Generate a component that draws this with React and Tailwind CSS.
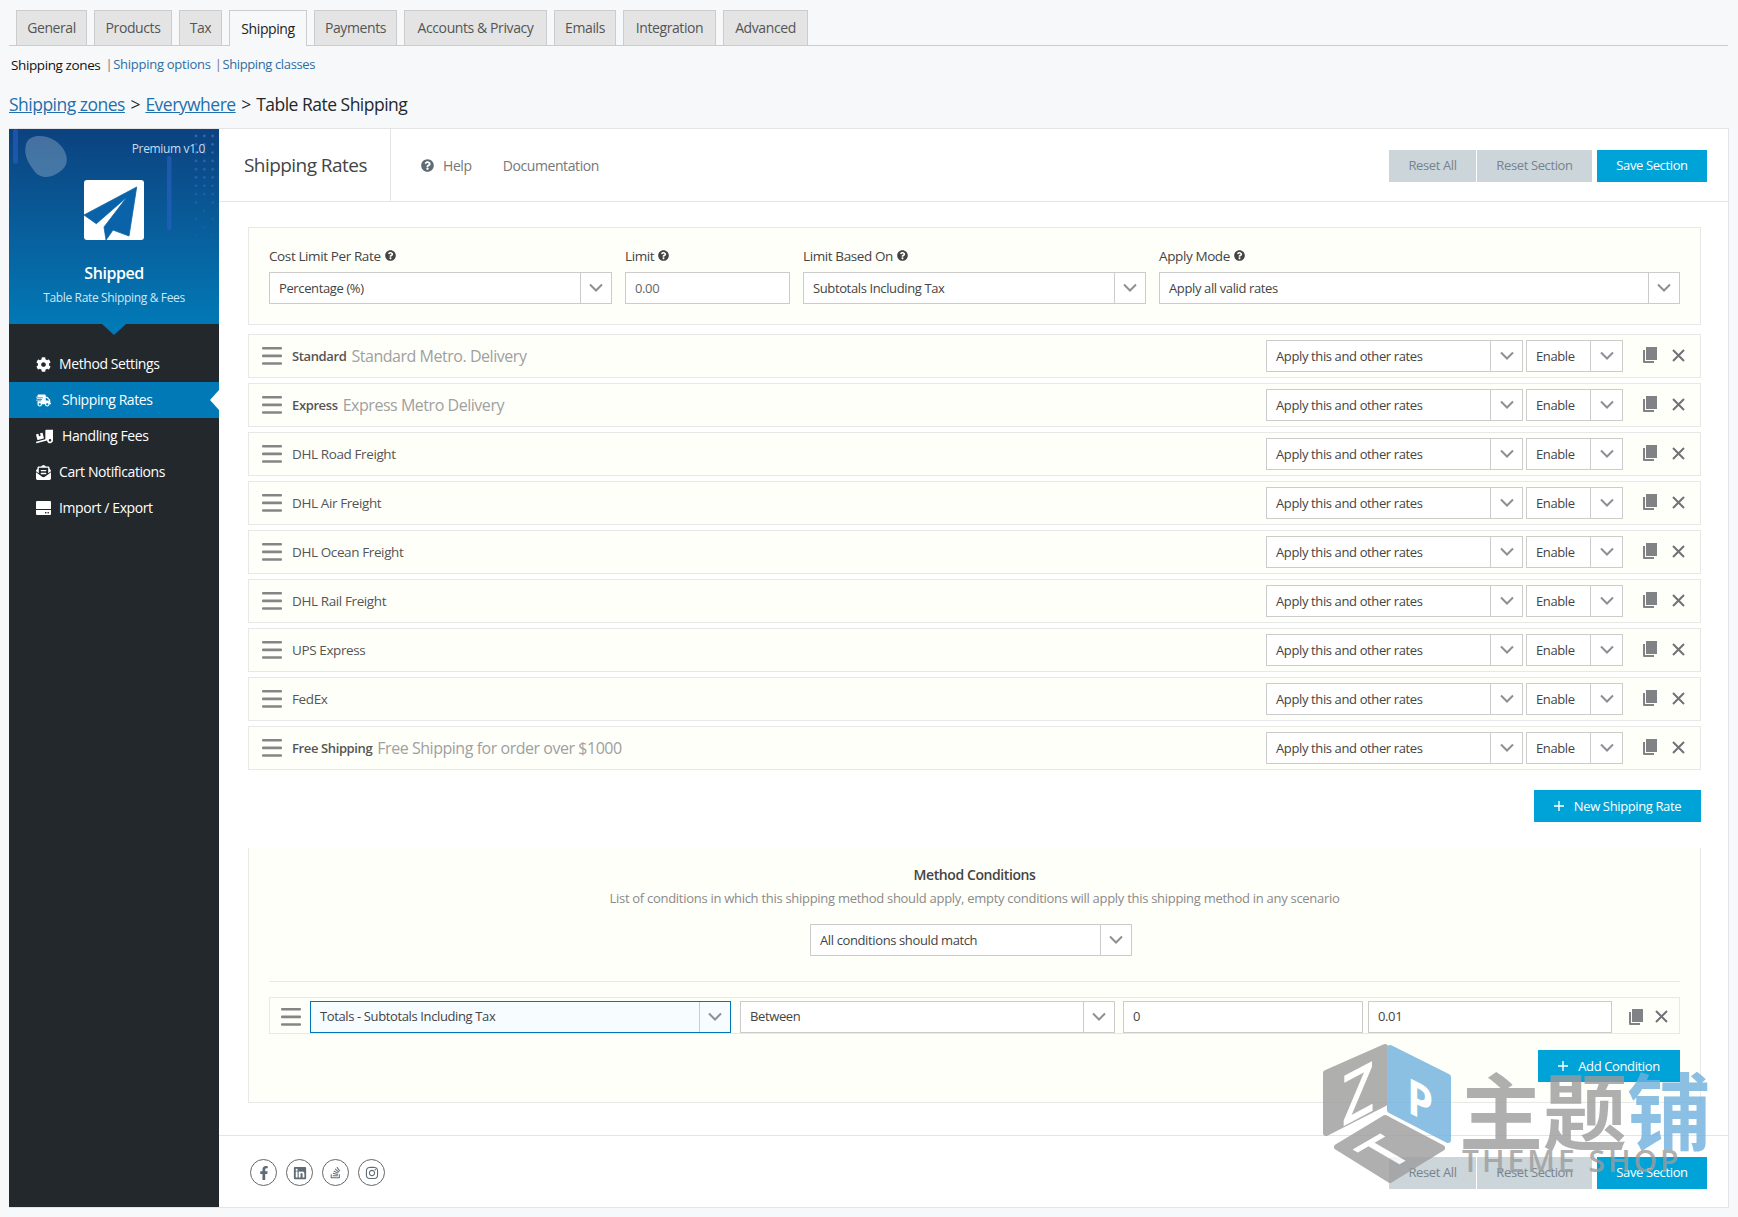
import {
  FaCog,
  FaShippingFast,
  FaTruckLoading,
  FaEnvelopeOpenText,
  FaQuestionCircle,
  FaFacebookF,
  FaLinkedin,
  FaStackOverflow,
  FaInstagram,
} from "react-icons/fa";

const tabs = [
  { label: "General", w: "w-[71px]" },
  { label: "Products", w: "w-[78px]" },
  { label: "Tax", w: "w-[43px]" },
  { label: "Shipping", w: "w-[78px]", active: true },
  { label: "Payments", w: "w-[83px]" },
  { label: "Accounts & Privacy", w: "w-[143px]" },
  { label: "Emails", w: "w-[62px]" },
  { label: "Integration", w: "w-[93px]" },
  { label: "Advanced", w: "w-[85px]" },
];

function DriveIcon({ className }) {
  return (
    <svg width="15" height="14" viewBox="0 0 15 14" className={className}>
      <path d="M1 0h13a1 1 0 0 1 1 1v7H0V1a1 1 0 0 1 1-1z" fill="#fff" />
      <path d="M0 9h15v4a1 1 0 0 1-1 1H1a1 1 0 0 1-1-1z" fill="#fff" />
      <rect x="9" y="11" width="1.4" height="1.4" fill="#23282d" />
      <rect x="11.5" y="11" width="1.4" height="1.4" fill="#23282d" />
    </svg>
  );
}

const menu = [
  { label: "Method Settings", icon: FaCog, slot: "w-[23px]", size: "text-[15px]" },
  { label: "Shipping Rates", icon: FaShippingFast, active: true, slot: "w-[26px]", size: "text-[15px]" },
  { label: "Handling Fees", icon: FaTruckLoading, slot: "w-[26px]", size: "text-[17px]" },
  { label: "Cart Notifications", icon: FaEnvelopeOpenText, slot: "w-[23px]", size: "text-[15px]" },
  { label: "Import / Export", icon: DriveIcon, slot: "w-[23px]", size: "text-[14px]" },
];

const rates = [
  { name: "Standard", note: "Standard Metro. Delivery", strong: true },
  { name: "Express", note: "Express Metro Delivery", strong: true },
  { name: "DHL Road Freight" },
  { name: "DHL Air Freight" },
  { name: "DHL Ocean Freight" },
  { name: "DHL Rail Freight" },
  { name: "UPS Express" },
  { name: "FedEx" },
  { name: "Free Shipping", note: "Free Shipping for order over $1000", strong: true },
];

function Chevron() {
  return (
    <svg width="16" height="10" viewBox="0 0 16 10" fill="none">
      <path d="M2 1.5 8 7.5 14 1.5" stroke="#8c8f94" strokeWidth="2" />
    </svg>
  );
}

function Bars() {
  return (
    <svg width="20" height="18" viewBox="0 0 20 18" className="shrink-0">
      <rect y="0" width="20" height="2.6" rx="1" fill="#858585" />
      <rect y="7.6" width="20" height="2.6" rx="1" fill="#858585" />
      <rect y="15.2" width="20" height="2.6" rx="1" fill="#858585" />
    </svg>
  );
}

function CopyIcon() {
  return (
    <svg width="14" height="16" viewBox="0 0 14 16" className="block shrink-0">
      <path d="M0 3h2v11h9v2H1a1 1 0 0 1-1-1z" fill="#808285" />
      <rect x="3" y="0" width="11" height="13" fill="#808285" />
    </svg>
  );
}

function CloseIcon() {
  return (
    <svg width="13" height="13" viewBox="0 0 13 13" className="block shrink-0">
      <path d="M1 1 12 12M12 1 1 12" stroke="#6f7276" strokeWidth="2" />
    </svg>
  );
}

function Select({ value, className, arrow = "w-[31px]", focused }) {
  return (
    <div
      className={`flex h-8 shrink-0 items-center border text-[13px] text-[#444] ${
        focused ? "border-[#0277b5] bg-[#f6fcff]" : "border-[#ccc] bg-white"
      } ${className}`}
    >
      <span className="flex-1 truncate pt-px pl-[9px]">{value}</span>
      <span className={`flex h-full items-center justify-center border-l border-[#ccc] ${arrow}`}>
        <Chevron />
      </span>
    </div>
  );
}

function Field({ label, children, className }) {
  return (
    <div className={className}>
      <div className="mb-[7px] flex h-[18px] items-center gap-[4px] text-[13.5px] text-[#444]">
        <span>{label}</span>
        <FaQuestionCircle className="mb-[2px] text-[11px] text-[#444]" />
      </div>
      {children}
    </div>
  );
}

function ActionButtons() {
  return (
    <div className="flex items-center text-[13px]">
      <span className="flex h-8 w-[87px] items-center justify-center bg-[#ccd5da] text-[#76838c]">Reset All</span>
      <span className="ml-px flex h-8 w-[115px] items-center justify-center bg-[#ccd5da] text-[#76838c]">
        Reset Section
      </span>
      <span className="ml-[5px] flex h-8 w-[110px] items-center justify-center bg-[#00a3d8] text-white">
        Save Section
      </span>
    </div>
  );
}

function RateRow({ rate }) {
  return (
    <div className="flex h-[44px] items-center border border-[#e8e8e8] bg-[#fffffa] pl-[13px] text-[#555]">
      <Bars />
      <span className={`ml-[10px] pt-px ${rate.strong ? "text-[13px] font-semibold" : "text-[13.5px] font-medium"}`}>
        {rate.name}
      </span>
      {rate.note && <span className="ml-[5px] text-[16px] text-[#a0a0a0]">{rate.note}</span>}
      <div className="ml-auto flex items-center">
        <Select value="Apply this and other rates" className="w-[257px]" arrow="w-[32px]" />
        <Select value="Enable" className="ml-[3px] w-[97px]" arrow="w-[32px]" />
        <span className="mr-[15px] mb-[2px] ml-[20px]">
          <CopyIcon />
        </span>
        <span className="mr-[15px] mb-[2px]">
          <CloseIcon />
        </span>
      </div>
    </div>
  );
}

function BlueButton({ label, className }) {
  return (
    <span className={`flex h-8 items-center justify-center gap-[10px] bg-[#00a3d8] text-[13px] text-white ${className}`}>
      <svg width="10" height="10" viewBox="0 0 10 10">
        <path d="M5 0v10M0 5h10" stroke="#fff" strokeWidth="1.4" />
      </svg>
      <span className="pt-px">{label}</span>
    </span>
  );
}

function HeaderArt() {
  const dots = [];
  for (let col = 0; col < 3; col++) {
    for (let row = 0; row < 13; row++) {
      if ((row + col) % 2 === 1 && row > 7) continue;
      dots.push(
        <circle key={`${col}-${row}`} cx={187 + col * 8.3} cy={7 + row * 8.3} r="1.4" fill="#3f6fd0" opacity={0.75 - row * 0.05} />,
      );
    }
  }
  return (
    <svg width="210" height="195" viewBox="0 0 210 195" className="absolute inset-0">
      <rect x="4" y="0" width="5" height="35" rx="2.5" fill="#2a5fc4" opacity="0.6" />
      <path d="M17 15C20 5 35 5 45 11C58 19 62 34 53 41C43 50 32 50 26 43C21 36 14 28 17 15Z" fill="#fff" opacity="0.24" />
      <rect x="158" y="27" width="4.5" height="74" rx="2" fill="#2a5fc4" opacity="0.65" />
      {dots}
    </svg>
  );
}

function SidebarHeader() {
  return (
    <div className="relative h-[195px] bg-gradient-to-b from-[#0b427f] to-[#0179b6]">
      <HeaderArt />
      <div className="relative flex flex-col items-center text-white">
        <div className="mt-[11px] mb-[22px] w-full pr-[14px] text-right text-[12px] leading-[18px] text-[#c8dcf0]">
          Premium v1.0
        </div>
        <div className="h-[60px] w-[60px] rounded-[3px] bg-white">
          <svg width="60" height="60" viewBox="0 0 60 60">
            <path
              d="M52.7 7 0 35l12.3 8.7L43 17 20 47l2 13 7-10 16 6z"
              fill="#0a63a8"
              stroke="#0a63a8"
              strokeWidth="0.8"
              strokeLinejoin="round"
            />
          </svg>
        </div>
        <div className="mt-[21px] text-[16px] leading-[24px] font-semibold">Shipped</div>
        <div className="mt-[4px] text-[12px] leading-[18px] text-[#cfe6f5]">Table Rate Shipping &amp; Fees</div>
      </div>
      <span className="absolute top-full left-1/2 -ml-[12px] h-0 w-0 border-x-[12px] border-t-[11px] border-x-transparent border-t-[#0179b6]" />
    </div>
  );
}

function Sidebar() {
  return (
    <aside className="w-[210px] shrink-0 bg-[#23282d]">
      <SidebarHeader />
      <ul className="mt-[22px]">
        {menu.map((item) => (
          <li
            key={item.label}
            className={`relative flex h-9 items-center pl-[27px] text-[14px] text-white ${item.active ? "bg-[#0179b6]" : ""}`}
          >
            <span className={`shrink-0 ${item.slot}`}>
              <item.icon className={item.size} />
            </span>
            <span className="pb-px">{item.label}</span>
            {item.active && (
              <span className="absolute top-1/2 right-0 -mt-[10px] h-0 w-0 border-y-[10px] border-r-[9px] border-y-transparent border-r-white" />
            )}
          </li>
        ))}
      </ul>
    </aside>
  );
}

function Social({ icon: Icon, size }) {
  return (
    <span className="flex h-[27px] w-[27px] items-center justify-center rounded-full border border-[#666] text-[#5f6b75]">
      <Icon className={size} />
    </span>
  );
}

function Watermark() {
  return (
    <div className="pointer-events-none absolute top-[1040px] left-[1320px] opacity-80">
      <svg width="135" height="145" viewBox="0 0 135 145" className="absolute top-0 left-0">
        <path d="M65 7 6 33v60l59-30z" fill="#9c9c9c" stroke="#9c9c9c" strokeWidth="6" strokeLinejoin="round" />
        <path d="M70 8l58 29v63L70 70z" fill="#6fb1de" stroke="#6fb1de" strokeWidth="6" strokeLinejoin="round" />
        <path d="M65 78l57 30-52 32-53-33z" fill="#9c9c9c" stroke="#9c9c9c" strokeWidth="6" strokeLinejoin="round" />
        <text transform="translate(22 87) skewY(-28) scale(.8 1)" fontSize="70" fontWeight="600" fill="#fff" fontFamily="Open Sans">
          Z
        </text>
        <text transform="translate(87 72) skewY(26) scale(.85 1)" fontSize="49" fontWeight="700" fill="#fff" fontFamily="Open Sans">
          P
        </text>
        <text transform="matrix(1.03 -0.6 1.01 0.59 68 131)" fontSize="50" fontWeight="600" fill="#fff" fontFamily="Open Sans">
          T
        </text>
      </svg>
      <div className="absolute top-[15px] left-[139px] flex text-[84px] leading-[106px] font-bold whitespace-nowrap text-[#9c9c9c] [font-family:'Noto_Sans_CJK_SC',sans-serif]">
        <span className="tracking-normal!">主题</span>
        <span className="tracking-normal! text-[#6fb1de]">铺</span>
      </div>
      <div className="absolute top-[99px] left-[142px] text-[30px] leading-[44px] font-semibold tracking-[3px]! whitespace-nowrap text-[#9c9c9c]">
        THEME SHOP
      </div>
    </div>
  );
}

export default function App() {
  return (
    <div className="relative h-[1217px] w-[1738px] overflow-hidden bg-[#f7f8fa] pt-[10px] text-[#444] [font-family:'Open_Sans',sans-serif] [&_*]:tracking-[-0.029em]">
      <div className="mr-[10px] ml-[9px] flex h-[36px] gap-[7px] border-b border-[#ccc] pl-[7px]">
        {tabs.map((tab) => (
          <span
            key={tab.label}
            className={`flex items-center justify-center border border-b-0 border-[#ccc] pb-px text-[14px] ${tab.w} ${
              tab.active ? "-mb-px bg-[#f7f8fa] font-medium text-[#222]" : "bg-[#e4e4e4] text-[#555]"
            }`}
          >
            {tab.label}
          </span>
        ))}
      </div>

      <div className="mt-[9px] ml-[11px] flex h-[20px] items-center text-[13px] text-[#2e6da4]">
        <span className="text-[13.5px] font-medium text-[#111]">Shipping zones</span>
        <span className="ml-[5px] text-[#777]">|</span>
        <span className="ml-px tracking-[-0.02em]!">Shipping options</span>
        <span className="ml-[4px] text-[#777]">|</span>
        <span className="ml-px">Shipping classes</span>
      </div>

      <div className="mt-[16px] ml-[9px] flex h-[26px] items-center gap-[5.5px] text-[17.5px] text-[#23282d]">
        <a className="text-[#1f70ad] underline">Shipping zones</a>
        <span>&gt;</span>
        <a className="text-[#1f70ad] underline">Everywhere</a>
        <span>&gt;</span>
        <span>Table Rate Shipping</span>
      </div>

      <div className="mt-[11px] ml-[9px] flex h-[1080px] w-[1720px] border border-l-0 border-[#e2e4e7] bg-white">
        <Sidebar />
        <main className="flex min-w-0 flex-1 flex-col">
          <header className="flex h-[73px] shrink-0 items-center border-b border-[#e5e5e5] pr-[21px]">
            <div className="flex h-full w-[172px] items-center border-r border-[#e5e5e5] pl-[25px] text-[19px] font-medium text-[#444]">
              Shipping Rates
            </div>
            <FaQuestionCircle className="ml-[30px] text-[13px] text-[#5f6b75]" />
            <span className="ml-[9px] text-[14px] text-[#777]">Help</span>
            <span className="ml-[31px] text-[14px] text-[#777]">Documentation</span>
            <div className="mt-[2px] ml-auto">
              <ActionButtons />
            </div>
          </header>

          <div className="flex-1 pt-[25px] pr-[27px] pl-[29px]">
            <section className="flex h-[98px] border border-[#e8e8e8] bg-[#fffffa] pt-[19px] pl-[20px]">
              <Field label="Cost Limit Per Rate" className="w-[343px]">
                <Select value="Percentage (%)" className="w-full" />
              </Field>
              <Field label="Limit" className="ml-[13px] w-[165px]">
                <div className="flex h-8 items-center border border-[#ccc] bg-white pt-px pl-[9px] text-[13px] text-[#666]">0.00</div>
              </Field>
              <Field label="Limit Based On" className="ml-[13px] w-[343px]">
                <Select value="Subtotals Including Tax" className="w-full" />
              </Field>
              <Field label="Apply Mode" className="ml-[13px] w-[521px]">
                <Select value="Apply all valid rates" className="w-full" />
              </Field>
            </section>

            <div className="mt-[9px] flex flex-col gap-[5px]">
              {rates.map((rate) => (
                <RateRow key={rate.name} rate={rate} />
              ))}
            </div>

            <div className="mt-[20px] flex justify-end">
              <BlueButton label="New Shipping Rate" className="w-[167px]" />
            </div>

            <section className="mt-[26px] h-[255px] border border-t-0 border-[#e8e8e8] bg-[#fffffa] px-[20px] pt-[17px]">
              <div className="text-center text-[14px] leading-[20px] font-semibold text-[#444]">Method Conditions</div>
              <div className="mt-[3px] text-center text-[13px] leading-[20px] tracking-[-0.022em]! text-[#8a8a8a]">
                List of conditions in which this shipping method should apply, empty conditions will apply this shipping
                method in any scenario
              </div>
              <div className="mt-[16px] flex justify-center">
                <Select value="All conditions should match" className="mr-[7px] w-[322px]" />
              </div>
              <div className="mt-[25px] border-t border-[#e8e8e8]" />
              <div className="mt-[15px] flex h-[37px] items-center border border-[#e8e8e8] pt-[2px] pl-[11px]">
                <Bars />
                <Select value="Totals - Subtotals Including Tax" className="ml-[9px] w-[421px]" focused />
                <Select value="Between" className="ml-[9px] w-[375px]" />
                <div className="ml-[8px] flex h-8 w-[240px] items-center border border-[#ccc] bg-white pt-px pl-[9px] text-[13px]">0</div>
                <div className="ml-[5px] flex h-8 w-[244px] items-center border border-[#ccc] bg-white pt-px pl-[9px] text-[13px]">0.01</div>
                <span className="ml-[17px]">
                  <CopyIcon />
                </span>
                <span className="ml-[12px]">
                  <CloseIcon />
                </span>
              </div>
              <div className="mt-[16px] flex justify-end">
                <BlueButton label="Add Condition" className="w-[142px]" />
              </div>
            </section>
          </div>

          <footer className="flex h-[72px] shrink-0 items-center border-t border-[#e5e5e5] pt-[2px] pr-[21px] pl-[31px]">
            <div className="flex gap-[9px]">
              <Social icon={FaFacebookF} size="text-[14px]" />
              <Social icon={FaLinkedin} size="text-[14px]" />
              <Social icon={FaStackOverflow} size="text-[13px]" />
              <Social icon={FaInstagram} size="text-[14px]" />
            </div>
            <div className="ml-auto">
              <ActionButtons />
            </div>
          </footer>
        </main>
      </div>

      <Watermark />
    </div>
  );
}
